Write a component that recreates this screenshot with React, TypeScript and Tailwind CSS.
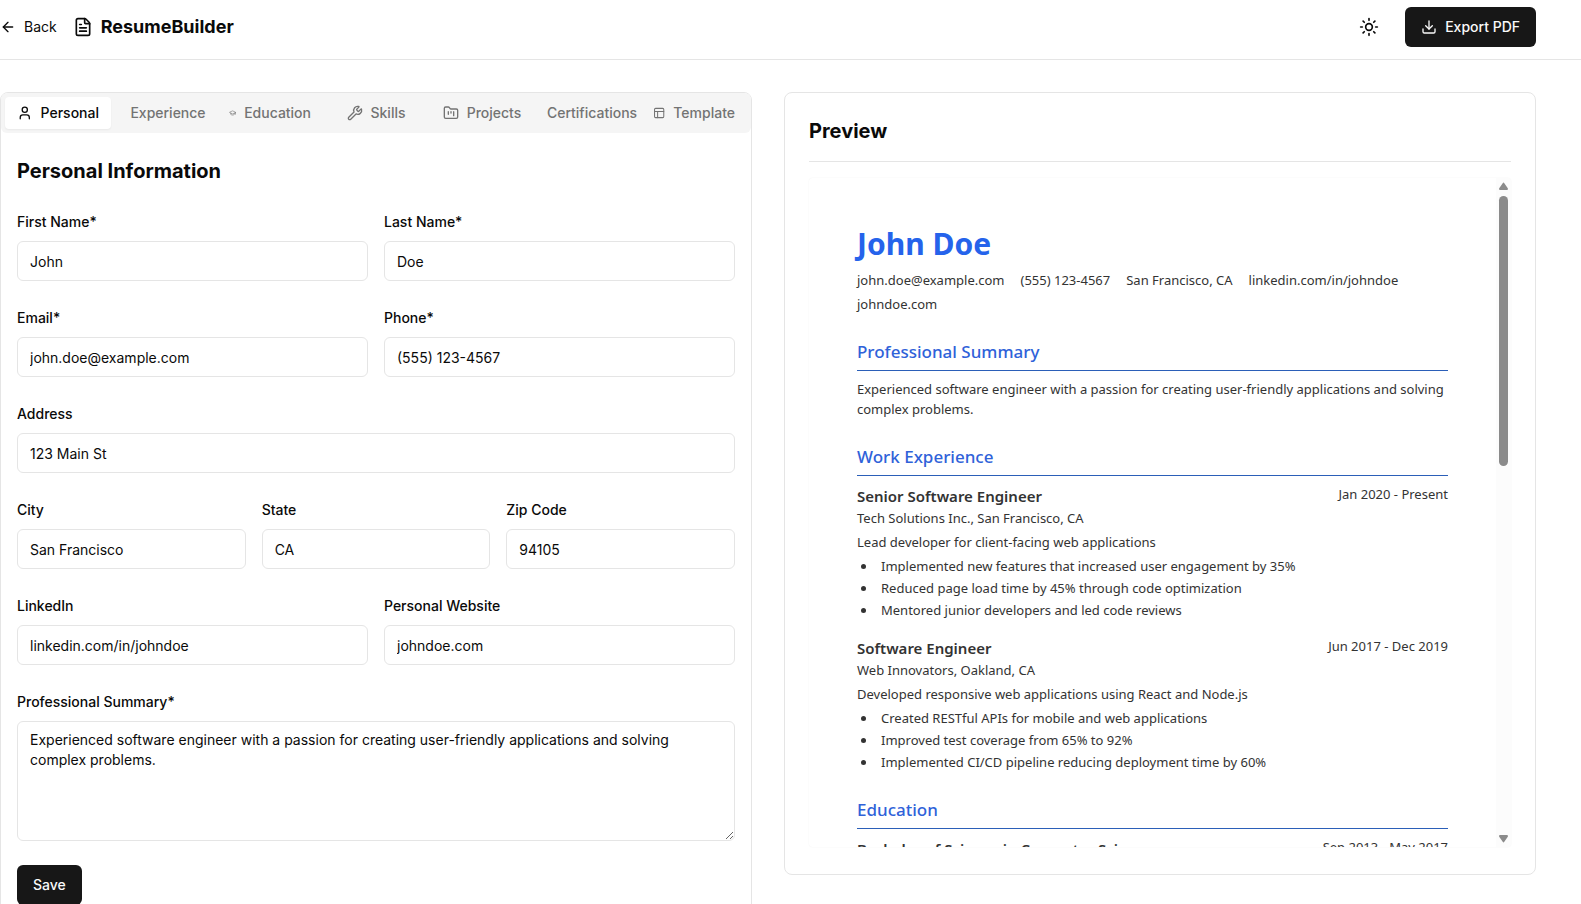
import type { ComponentType, ReactNode } from "react";
import {
  ArrowLeft,
  Award,
  Briefcase,
  Download,
  FileText,
  FolderKanban,
  GraduationCap,
  PanelsTopLeft,
  Sun,
  User,
  Wrench,
} from "lucide-react";

type IconType = ComponentType<{ className?: string }>;

const tabs: { label: string; icon: IconType }[] = [
  { label: "Personal", icon: User },
  { label: "Experience", icon: Briefcase },
  { label: "Education", icon: GraduationCap },
  { label: "Skills", icon: Wrench },
  { label: "Projects", icon: FolderKanban },
  { label: "Certifications", icon: Award },
  { label: "Template", icon: PanelsTopLeft },
];

const summary =
  "Experienced software engineer with a passion for creating user-friendly applications and solving complex problems.";

const jobs = [
  {
    title: "Senior Software Engineer",
    place: "Tech Solutions Inc., San Francisco, CA",
    dates: "Jan 2020 - Present",
    about: "Lead developer for client-facing web applications",
    points: [
      "Implemented new features that increased user engagement by 35%",
      "Reduced page load time by 45% through code optimization",
      "Mentored junior developers and led code reviews",
    ],
  },
  {
    title: "Software Engineer",
    place: "Web Innovators, Oakland, CA",
    dates: "Jun 2017 - Dec 2019",
    about: "Developed responsive web applications using React and Node.js",
    points: [
      "Created RESTful APIs for mobile and web applications",
      "Improved test coverage from 65% to 92%",
      "Implemented CI/CD pipeline reducing deployment time by 60%",
    ],
  },
];

function Field({ id, label, value }: { id: string; label: string; value: string }) {
  return (
    <div className="flex min-w-0 flex-col gap-[9px]">
      <label htmlFor={id} className="text-sm font-medium">
        {label}
      </label>
      <input
        id={id}
        defaultValue={value}
        className="h-10 w-full rounded-md border border-[#e5e5e5] bg-white px-3 text-sm"
      />
    </div>
  );
}

function Header() {
  return (
    <header className="border-b border-[#e5e5e5]">
      <div className="flex max-w-[1536px] items-center justify-between pt-[7px] pb-3">
        <div className="flex items-center gap-4">
          <a href="#" className="flex items-center gap-2 text-sm">
            <ArrowLeft className="size-4" />
            Back
          </a>
          <div className="flex items-center gap-2">
            <FileText className="size-5" />
            <h1 className="text-lg font-bold">ResumeBuilder</h1>
          </div>
        </div>
        <div className="flex items-center gap-4">
          <button aria-label="Toggle theme" className="flex size-10 items-center justify-center rounded-md">
            <Sun className="size-5" />
          </button>
          <button className="flex h-10 items-center gap-2 rounded-md bg-[#171717] px-4 text-sm font-medium text-[#fafafa]">
            <Download className="size-4" />
            Export PDF
          </button>
        </div>
      </div>
    </header>
  );
}

function TabBar() {
  return (
    <div role="tablist" className="grid h-10 grid-cols-7 rounded-md bg-[#f5f5f5] p-1 text-[#737373]">
      {tabs.map(({ label, icon: Icon }, i) => (
        <button
          key={label}
          role="tab"
          aria-selected={i === 0}
          className="flex items-center justify-center rounded-sm px-3 text-sm font-medium whitespace-nowrap aria-selected:bg-white aria-selected:text-[#0a0a0a] aria-selected:shadow-xs"
        >
          <Icon className="mr-2 h-4 w-4 min-w-0" />
          {label}
        </button>
      ))}
    </div>
  );
}

function PersonalForm() {
  return (
    <section className="rounded-lg border border-[#e5e5e5]">
      <TabBar />
      <form className="flex flex-col gap-[27px] px-4 pt-6 pb-4">
        <h2 className="text-xl font-bold">Personal Information</h2>
        <div className="grid grid-cols-2 gap-x-4 gap-y-[27px]">
          <Field id="first" label="First Name*" value="John" />
          <Field id="last" label="Last Name*" value="Doe" />
          <Field id="email" label="Email*" value="john.doe@example.com" />
          <Field id="phone" label="Phone*" value="(555) 123-4567" />
        </div>
        <Field id="address" label="Address" value="123 Main St" />
        <div className="grid grid-cols-3 gap-4">
          <Field id="city" label="City" value="San Francisco" />
          <Field id="state" label="State" value="CA" />
          <Field id="zip" label="Zip Code" value="94105" />
        </div>
        <div className="grid grid-cols-2 gap-4">
          <Field id="linkedin" label="LinkedIn" value="linkedin.com/in/johndoe" />
          <Field id="website" label="Personal Website" value="johndoe.com" />
        </div>
        <div className="flex flex-col gap-6">
          <div className="flex flex-col gap-[9px]">
            <label htmlFor="summary" className="text-sm font-medium">
              Professional Summary*
            </label>
            <textarea
              id="summary"
              defaultValue={summary}
              className="h-[120px] w-full resize-y rounded-md border border-[#e5e5e5] bg-white px-3 py-2 text-sm"
            />
          </div>
          <button
            type="button"
            className="h-10 self-start rounded-md bg-[#171717] px-4 text-sm font-medium text-[#fafafa]"
          >
            Save
          </button>
        </div>
      </form>
    </section>
  );
}

function ResumeSection({ title, children }: { title: string; children: ReactNode }) {
  return (
    <section className="mt-6">
      <h3 className="mb-2 border-b border-[#2b5fb8] pb-1 text-[17px] leading-7 font-medium text-[#2f62d9]">
        {title}
      </h3>
      {children}
    </section>
  );
}

function Resume() {
  return (
    <article
      tabIndex={0}
      className="min-w-0 flex-1 overflow-y-auto p-12 font-['Noto_Sans',sans-serif] text-[13px] leading-5 text-[#333333] [scrollbar-width:none]"
    >
      <h2 className="text-3xl font-bold text-[#2563eb]">John Doe</h2>
      <div className="mt-2 flex flex-wrap gap-x-4 gap-y-1">
        <span>john.doe@example.com</span>
        <span>(555) 123-4567</span>
        <span>San Francisco, CA</span>
        <span>linkedin.com/in/johndoe</span>
        <span>johndoe.com</span>
      </div>
      <ResumeSection title="Professional Summary">
        <p>{summary}</p>
      </ResumeSection>
      <ResumeSection title="Work Experience">
        <div className="flex flex-col gap-4">
          {jobs.map((job) => (
            <div key={job.title}>
              <div className="flex items-start justify-between">
                <div>
                  <h4 className="text-[15px] leading-6 font-semibold">{job.title}</h4>
                  <p>{job.place}</p>
                </div>
                <p>{job.dates}</p>
              </div>
              <p className="mt-1">{job.about}</p>
              <ul className="mt-1 flex flex-col gap-0.5 pl-1">
                {job.points.map((point) => (
                  <li key={point} className="flex items-center gap-[15px]">
                    <span className="size-[5px] rounded-full bg-[#333333]" />
                    {point}
                  </li>
                ))}
              </ul>
            </div>
          ))}
        </div>
      </ResumeSection>
      <ResumeSection title="Education">
        <div className="flex items-start justify-between">
          <h4 className="text-[15px] leading-6 font-semibold">Bachelor of Science in Computer Science</h4>
          <p>Sep 2013 - May 2017</p>
        </div>
      </ResumeSection>
    </article>
  );
}

function ScrollTrack() {
  return (
    <div aria-hidden="true" className="flex w-[15px] flex-col items-center bg-[#fcfcfc] py-1 text-[#8b8b8b]">
      <svg viewBox="0 0 9 8" className="h-2 w-[9px]" fill="currentColor">
        <path d="M3.7 1.2Q4.5 0 5.3 1.2L8.8 6.2Q9.3 8 8 8H1Q-.3 8 .2 6.2Z" />
      </svg>
      <div className="flex w-[9px] flex-1 flex-col py-1.5">
        <div className="h-[270px] rounded-full bg-[#8b8b8b]" />
      </div>
      <svg viewBox="0 0 9 8" className="h-2 w-[9px]" fill="currentColor">
        <path d="M3.7 6.8Q4.5 8 5.3 6.8L8.8 1.8Q9.3 0 8 0H1Q-.3 0 .2 1.8Z" />
      </svg>
    </div>
  );
}

function Preview() {
  return (
    <section className="self-start rounded-lg border border-[#e5e5e5] px-6 pt-6 pb-[27px]">
      <h2 className="mb-4 border-b border-[#e5e5e5] pb-4 text-xl font-bold">Preview</h2>
      <div className="flex h-[669px] overflow-hidden rounded-sm shadow-[0_0_2px_rgba(0,0,0,0.06)]">
        <Resume />
        <ScrollTrack />
      </div>
    </section>
  );
}

export default function App() {
  return (
    <div className="h-screen overflow-y-auto bg-white font-['Inter',sans-serif] text-[#0a0a0a] [scrollbar-width:none]">
      <Header />
      <main className="grid max-w-[1536px] grid-cols-2 gap-8 py-8">
        <PersonalForm />
        <Preview />
      </main>
    </div>
  );
}
